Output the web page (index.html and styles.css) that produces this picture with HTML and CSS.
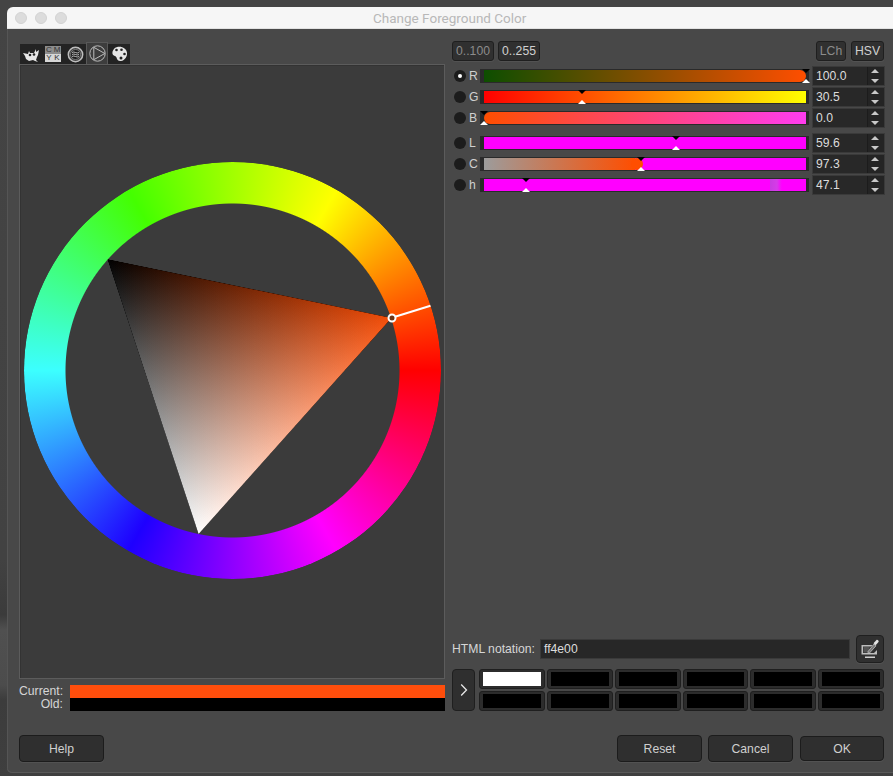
FILE: index.html
```html
<!DOCTYPE html>
<html lang="en">
<head>
<meta charset="utf-8">
<title>Change Foreground Color</title>
<link rel="stylesheet" href="styles.css">
</head>
<body>
<div class="window">
  <header class="titlebar">
    <span class="light"></span><span class="light"></span><span class="light"></span>
    <span class="title">Change Foreground Color</span>
  </header>
  <div class="content">
    <section class="left">
      <div class="tabs">
        <div class="tab">
          <svg width="18" height="16" viewBox="0 0 18 16"><path class="ic-fill" d="M1 7l5 1 1-3 1 2 4 0 2-4 0 3 3-2-1 5-1 2-1 3 2 2-3-1-2-1-4 1-3-2-1-3z"/><circle class="ic-dark" cx="8" cy="9" r="1.3"/><circle class="ic-dark" cx="12" cy="8.5" r="1.3"/></svg>
        </div>
        <div class="tab">
          <div class="cmyk"><span class="ck c1">C</span><span class="ck c1">M</span><span class="ck c2">Y</span><span class="ck c2">K</span></div>
        </div>
        <div class="tab">
          <svg width="17" height="17" viewBox="0 0 17 17"><circle class="ic-ring" cx="8.5" cy="8.5" r="7.2"/><circle class="ic-disc" cx="8.5" cy="8.5" r="5"/><path class="ic-line" d="M5 6.5q1.700-1 3.500 0t3.500 0M5 8.500q1.700-1 3.500 0t3.500 0M5 10.500q1.700-1 3.500 0t3.500 0"/></svg>
        </div>
        <div class="tab tab-active">
          <svg width="17" height="17" viewBox="0 0 17 17"><circle class="ic-thin" cx="8.500" cy="8.500" r="7.700"/><path class="ic-thin" d="M4.800 2.300L15.800 8.500 4.800 14.700z"/></svg>
        </div>
        <div class="tab">
          <svg width="17" height="16" viewBox="0 0 17 16"><path class="ic-fill" d="M7 .8c4.500-.6 8.500 2 9 6 .4 3.500-2 7.800-6 8.200-3 .3-4-1.500-4.500-3.500C5 9.500 3 10.500 1.800 8.500.5 6 2.800 1.400 7 .8z"/><circle class="ic-dark" cx="5.500" cy="4" r="1.300"/><circle class="ic-dark" cx="10.500" cy="3.800" r="1.300"/><circle class="ic-dark" cx="13.500" cy="8" r="1.300"/><circle class="ic-dark" cx="10" cy="12" r="1.500"/></svg>
        </div>
      </div>
      <div class="frame">
        <div class="wheel-box">
          <div class="wheel"></div>
          <svg class="wheel-overlay" width="417" height="417" viewBox="24 162 417 417">
            <defs>
              <linearGradient id="hueGrad" gradientUnits="userSpaceOnUse" x1="391.500" y1="318" x2="153.200" y2="396.800">
                <stop offset="0" stop-color="#f24e0a"/><stop offset="1" stop-color="#000"/>
              </linearGradient>
              <linearGradient id="whiteGrad" gradientUnits="userSpaceOnUse" x1="198.600" y1="534" x2="249.650" y2="288.700">
                <stop offset="0" stop-color="#fff"/><stop offset="1" stop-color="#000"/>
              </linearGradient>
            </defs>
            <g class="tri-group">
              <polygon fill="url(#hueGrad)" points="391.500,318 107.800,259.400 198.600,534"/>
              <polygon class="tri-add" fill="url(#whiteGrad)" points="391.500,318 107.800,259.400 198.600,534"/>
            </g>
            <line class="hue-mark" x1="395" y1="316.800" x2="430.500" y2="305.800"/>
            <circle class="sv-mark" cx="392" cy="318" r="3.500"/>
          </svg>
        </div>
      </div>
      <div class="compare">
        <div class="compare-labels"><span>Current:</span><span>Old:</span></div>
        <div class="compare-bars"><div class="bar-current"></div><div class="bar-old"></div></div>
      </div>
      <div class="help-row"><button class="btn btn-help">Help</button></div>
    </section>

    <section class="right">
      <div class="top-row">
        <div class="btn-group"><button class="tog tog-dim">0..100</button><button class="tog">0..255</button></div>
        <div class="btn-group btn-group-model"><button class="tog tog-dim tog-lch">LCh</button><button class="tog tog-hsv">HSV</button></div>
      </div>
      <div class="sliders">
        <div class="slider-row">
          <span class="radio radio-on"></span><span class="s-label">R</span>
          <div class="track"><div class="fill g-r"><span class="thumb" style="left:100%"></span></div></div>
          <div class="spin"><span class="spin-val">100.0</span><span class="spin-btns"><i class="up"></i><i class="down"></i></span></div>
        </div>
        <div class="slider-row">
          <span class="radio"></span><span class="s-label">G</span>
          <div class="track"><div class="fill g-g"><span class="thumb" style="left:30.5%"></span></div></div>
          <div class="spin"><span class="spin-val">30.5</span><span class="spin-btns"><i class="up"></i><i class="down"></i></span></div>
        </div>
        <div class="slider-row">
          <span class="radio"></span><span class="s-label">B</span>
          <div class="track"><div class="fill g-b"><span class="thumb" style="left:0%"></span></div></div>
          <div class="spin"><span class="spin-val">0.0</span><span class="spin-btns"><i class="up"></i><i class="down"></i></span></div>
        </div>
        <div class="slider-row row-gap">
          <span class="radio"></span><span class="s-label">L</span>
          <div class="track"><div class="fill g-l"><span class="thumb" style="left:59.6%"></span></div></div>
          <div class="spin"><span class="spin-val">59.6</span><span class="spin-btns"><i class="up"></i><i class="down"></i></span></div>
        </div>
        <div class="slider-row">
          <span class="radio"></span><span class="s-label">C</span>
          <div class="track"><div class="fill g-c"><span class="blob" style="left:48.650%"></span><span class="thumb" style="left:48.650%"></span></div></div>
          <div class="spin"><span class="spin-val">97.3</span><span class="spin-btns"><i class="up"></i><i class="down"></i></span></div>
        </div>
        <div class="slider-row">
          <span class="radio"></span><span class="s-label">h</span>
          <div class="track"><div class="fill g-h"><span class="thumb" style="left:13.080%"></span></div></div>
          <div class="spin"><span class="spin-val">47.1</span><span class="spin-btns"><i class="up"></i><i class="down"></i></span></div>
        </div>
      </div>
      <div class="html-row">
        <label class="html-label">HTML notation:</label>
        <div class="html-entry">ff4e00</div>
        <button class="picker">
          <svg width="22" height="22" viewBox="0 0 22 22">
            <path class="pk-screen" d="M2.500 7h11l-1.500 1.500H4v6.500h11l1.500-1.500 1.500-1.500v4.500H2.500z"/>
            <rect class="pk-inner" x="4.500" y="9" width="6" height="5.500"/>
            <path class="pk-stand" d="M6 18.500h10v1.500H6z"/>
            <path class="pk-drop" d="M9.500 15l-.8-1L15 6l2 1.800L10.500 15z"/>
            <path class="pk-tip" d="M14.500 5.200l3-3.200c.8-.8 2.800 1 2 2l-2.800 3.300z"/>
          </svg>
        </button>
      </div>
      <div class="palette-row">
        <button class="arrow-btn"><svg width="8" height="14" viewBox="0 0 8 14"><path d="M1.200 1.500L6.500 7 1.200 12.500"/></svg></button>
        <div class="swatches">
          <div class="swatch"><div class="swatch-in sw-white"></div></div>
          <div class="swatch"><div class="swatch-in"></div></div>
          <div class="swatch"><div class="swatch-in"></div></div>
          <div class="swatch"><div class="swatch-in"></div></div>
          <div class="swatch"><div class="swatch-in"></div></div>
          <div class="swatch"><div class="swatch-in"></div></div>
          <div class="swatch"><div class="swatch-in"></div></div>
          <div class="swatch"><div class="swatch-in"></div></div>
          <div class="swatch"><div class="swatch-in"></div></div>
          <div class="swatch"><div class="swatch-in"></div></div>
          <div class="swatch"><div class="swatch-in"></div></div>
          <div class="swatch"><div class="swatch-in"></div></div>
        </div>
      </div>
      <div class="action-row">
        <button class="btn btn-reset">Reset</button>
        <button class="btn btn-cancel">Cancel</button>
        <button class="btn btn-ok">OK</button>
      </div>
    </section>
  </div>
</div>
</body>
</html>
```

FILE: styles.css
```css
* { box-sizing: border-box; }
html, body { margin: 0; height: 100%; }
body {
  width: 893px;
  height: 776px;
  overflow: hidden;
  padding: 7px 0 3px 7px;
  background: linear-gradient(#444 0, #424242 560px, #3b3b3b 615px, #505050 630px, #4c4c4c 685px, #3c3c3c 700px, #3f3f3f 100%);
  font-family: "Liberation Sans", Arial, sans-serif;
  font-size: 12.200px;
  color: #d6d6d6;
}
button { font: inherit; color: inherit; padding: 0; margin: 0; }

.window {
  height: 766px;
  background: #484848;
  border-radius: 6px 0 0 5px;
  box-shadow: inset 1px 0 0 #555, inset 0 -1px 0 #595959;
  display: flex;
  flex-direction: column;
  overflow: hidden;
}
.titlebar {
  height: 22px;
  flex: none;
  background: #f6f6f6;
  border-bottom: 1px solid #e2e2e2;
  display: flex;
  align-items: center;
  gap: 8px;
  padding-left: 8px;
  position: relative;
}
.light { width: 12px; height: 12px; border-radius: 50%; background: #dcdcdc; border: 1px solid #d2d2d2; }
.title {
  position: absolute;
  left: 366px;
  top: 3px;
  font-family: Roboto, "Liberation Sans", sans-serif;
  font-size: 13.500px;
  line-height: 16px;
  color: #b8b8b8;
}

.content {
  flex: 1;
  display: grid;
  grid-template-columns: 426px 433px;
  column-gap: 7px;
  padding: 12px 0 11px 12px;
  min-height: 0;
}
.left, .right { display: flex; flex-direction: column; min-height: 0; }

/* tabs */
.tabs { display: flex; height: 23px; align-items: flex-end; padding-left: 1px; }
.tab {
  width: 22px;
  height: 20px;
  background: #232323;
  display: flex;
  align-items: center;
  justify-content: center;
}
.tab-active {
  height: 22px;
  background: #3d3d3d;
  border: 1px solid #595959;
  border-bottom: 0;
}
.ic-fill { fill: #e6e6e6; }
.ic-dark { fill: #232323; }
.ic-ring { fill: #444; stroke: #bdbdbd; stroke-width: 1.500; }
.ic-disc { fill: #1d1d1d; stroke: #777; stroke-width: 1; }
.ic-line { fill: none; stroke: #c8c8c8; stroke-width: .9; }
.ic-thin { fill: none; stroke: #bcbcbc; stroke-width: 1; }
.cmyk {
  width: 16px;
  height: 16px;
  display: grid;
  grid-template-columns: 1fr 1fr;
  font-size: 8px;
  line-height: 8px;
  text-align: center;
  color: #333;
}
.ck { display: block; }
.c1 { background: #8c8c8c; }
.c2 { background: #d6d6d6; }

.frame {
  height: 615px;
  background: #3b3b3b;
  border: 1px solid #5c5c5c;
  box-shadow: inset 1px 1px 0 #333;
  display: flex;
  justify-content: center;
  padding-top: 97px;
}
.wheel-box { position: relative; width: 417px; height: 417px; margin-left: 1px; }
.wheel {
  width: 417px;
  height: 417px;
  border-radius: 50%;
  background: conic-gradient(from 90deg, #ff0000, #ff00ff, #1e00ff, #3cffff, #44ff00, #ffff00, #ff0000);
  -webkit-mask: radial-gradient(circle closest-side, transparent 166.500px, #000 167.500px);
  mask: radial-gradient(circle closest-side, transparent 166.500px, #000 167.500px);
}
.wheel-overlay { position: absolute; left: 0; top: 0; }
.tri-group { isolation: isolate; }
.tri-add { mix-blend-mode: plus-lighter; }
.hue-mark { stroke: #fff; stroke-width: 2; }
.sv-mark { fill: #6b3416; stroke: #fff; stroke-width: 2; }

.compare { display: flex; height: 26px; margin-top: 6px; }
.compare-labels {
  width: 45px;
  display: flex;
  flex-direction: column;
  text-align: right;
  padding-right: 1px;
  line-height: 13px;
  flex: none;
}
.compare-bars { flex: 1; margin-left: 6px; display: flex; flex-direction: column; }
.bar-current { height: 13px; background: #ff4e0c; }
.bar-old { height: 13px; background: #000; }

.help-row { margin-top: 24px; }
.btn {
  height: 27px;
  background: #2f2f2f;
  border: 1px solid #1c1c1c;
  border-radius: 4px;
  color: #cfcfcf;
  box-shadow: 0 1px 0 #525252;
}
.btn-help { width: 85px; }

/* right column */
.top-row { display: flex; justify-content: space-between; height: 20px; padding-right: 1px; }
.btn-group { display: flex; gap: 4px; }
.btn-group-model { gap: 5px; }
.tog {
  height: 20px;
  width: 42px;
  background: #303030;
  border: 1px solid #1f1f1f;
  border-radius: 3px;
  color: #d0d0d0;
  box-shadow: 0 1px 0 #525252;
}
.tog-dim { color: #8c8c8c; }
.tog-lch { width: 30px; }
.tog-hsv { width: 33px; }

.sliders { display: flex; flex-direction: column; margin-top: 4px; }
.slider-row { display: flex; align-items: center; height: 21px; }
.row-gap { margin-top: 4.500px; }
.radio {
  width: 12px;
  height: 12px;
  margin-left: 2px;
  border-radius: 50%;
  background: #1c1c1c;
  flex: none;
  position: relative;
}
.radio-on::after {
  content: "";
  position: absolute;
  left: 4px;
  top: 4px;
  width: 4px;
  height: 4px;
  border-radius: 50%;
  background: #fff;
}
.s-label { width: 14px; flex: none; padding-left: 3px; line-height: 14px; color: #d0d0d0; }
.track {
  width: 329px;
  height: 14px;
  flex: none;
  background: #2a2a2a;
  padding: 1px 3px 1px 4px;
}
.fill { position: relative; height: 12px; }
.g-r { background: linear-gradient(90deg, #0d4e00, #ff4e00); border-radius: 0 6px 6px 0; }
.g-g { background: linear-gradient(90deg, #f00, #ff0); }
.g-b { background: linear-gradient(90deg, #ff4e00, #ff3cf0); border-radius: 6px 0 0 6px; }
.g-l { background: #f0f; }
.g-c { background: linear-gradient(90deg, #9c9c9c 0, #ff4e00 46.800%, #f0f 46.800%); }
.g-h { background: linear-gradient(90deg, #f0f 0, #f0f 88.700%, #c83ce0 88.900%, #d63ce8 91%, #f0f 92.500%); }
.blob { position: absolute; top: 0; width: 12px; height: 12px; margin-left: -10px; border-radius: 50%; background: #ff4e00; }
.thumb { position: absolute; left: 0; top: -1px; width: 0; height: 14px; }
.thumb::before, .thumb::after {
  content: "";
  position: absolute;
  left: -4px;
  border-left: 4px solid transparent;
  border-right: 4px solid transparent;
}
.thumb::before { top: 0; border-top: 4px solid #000; }
.thumb::after { bottom: 0; border-bottom: 4px solid #fff; }

.spin {
  margin-left: 3px;
  width: 73px;
  height: 20px;
  flex: none;
  display: flex;
  background: #2a2a2a;
  border: 1px solid #3a3a3a;
}
.spin-val { flex: 1; padding-left: 3px; line-height: 18px; background: #282828; color: #dcdcdc; }
.spin-btns {
  width: 17px;
  flex: none;
  background: #242424;
  display: flex;
  flex-direction: column;
  border-left: 1px solid #1c1c1c;
}
.spin-btns i { flex: 1; position: relative; display: block; }
.spin-btns i::after {
  content: "";
  position: absolute;
  left: 3px;
  border-left: 4px solid transparent;
  border-right: 4px solid transparent;
}
.up::after { top: 2px; border-bottom: 4px solid #c8c8c8; }
.down::after { bottom: 2px; border-top: 4px solid #c8c8c8; }

.html-row { display: flex; align-items: center; height: 28px; margin-top: auto; }
.html-label { width: 88px; flex: none; white-space: nowrap; color: #d6d6d6; }
.html-entry {
  width: 310px;
  height: 20px;
  padding-left: 3px;
  background: #272727;
  border: 1px solid #3a3a3a;
  line-height: 18px;
  color: #dcdcdc;
}
.picker {
  width: 28px;
  height: 28px;
  margin-left: 6px;
  background: #303030;
  border: 1px solid #1f1f1f;
  border-radius: 4px;
  box-shadow: 0 1px 0 #525252;
  display: flex;
  align-items: center;
  justify-content: center;
}
.pk-screen { fill: #bdbdbd; }
.pk-inner { fill: #555; }
.pk-stand { fill: #cfcfcf; }
.pk-drop { fill: #777; stroke: #cfcfcf; stroke-width: .7; }
.pk-tip { fill: #e4e4e4; }

.palette-row { display: flex; height: 43px; margin-top: 6px; }
.arrow-btn {
  width: 23px;
  height: 42px;
  flex: none;
  background: #2f2f2f;
  border: 1px solid #1f1f1f;
  border-radius: 4px;
  display: flex;
  align-items: center;
  justify-content: center;
}
.arrow-btn path { fill: none; stroke: #e8e8e8; stroke-width: 1.300; }
.swatches {
  margin-left: 4px;
  width: 405px;
  display: grid;
  grid-template-columns: repeat(6, 1fr);
  grid-template-rows: 20px 20px;
  gap: 2px;
}
.swatch {
  background: #2c2c2c;
  border: 1px solid #1f1f1f;
  border-radius: 3px;
  padding: 2px 3px;
}
.swatch-in { height: 100%; background: #000; }
.sw-white { background: #fff; }

.action-row { display: flex; height: 27px; margin-top: 23px; padding-left: 165px; flex: none; }
.btn-cancel { width: 85px; margin-left: 6px; }
.btn-reset { width: 85px; }
.btn-ok { width: 84px; margin-left: 7px; height: 25px; margin-top: 1px; }
```
